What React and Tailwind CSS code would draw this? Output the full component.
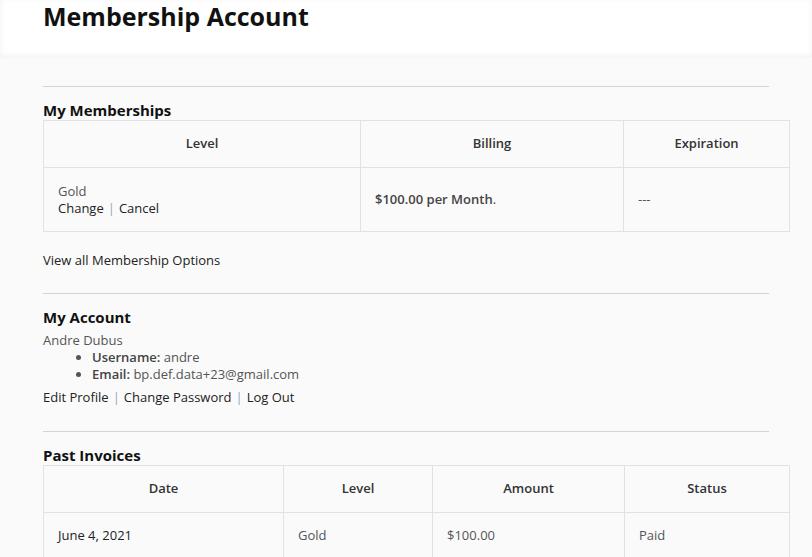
export default function App() {
  const f = { fontFamily: '"Open Sans", sans-serif' };
  const Pipe = () => <span className="text-[#8fa9c4] mx-[4px]">|</span>;
  return (
    <div style={f} className="w-[812px] h-[557px] overflow-hidden bg-[#fafafa] text-[13px] text-[#222]">
      <div className="h-[58px] bg-white shadow-[0_-2px_6px_rgba(0,0,0,0.06)_inset] pl-[43px]">
        <h1 className="text-[25px] font-bold leading-[30px] pt-[1px] text-[#111]">Membership Account</h1>
      </div>
      <div className="mx-[43px] pt-[28px]">
        <div className="border-t border-[#d4d4d4]" />
        <h2 className="text-[15px] font-bold leading-[20px] mt-[13px] text-[#111]">My Memberships</h2>
        <table className="w-[747px] border-collapse border border-[#e2e2e2] mt-[0px]">
          <thead>
            <tr className="h-[47px]">
              <th className="w-[317px] border border-[#e2e2e2] font-semibold text-[#333]">Level</th>
              <th className="w-[263px] border border-[#e2e2e2] font-semibold text-[#333]">Billing</th>
              <th className="border border-[#e2e2e2] font-semibold text-[#333]">Expiration</th>
            </tr>
          </thead>
          <tbody>
            <tr className="h-[64px]">
              <td className="border border-[#e2e2e2] px-[14px] leading-[17px]">
                <div className="text-[#555]">Gold</div>
                <div>Change<Pipe />Cancel</div>
              </td>
              <td className="border border-[#e2e2e2] px-[14px] text-[#444]"><b className="font-semibold">$100.00 per Month</b>.</td>
              <td className="border border-[#e2e2e2] px-[14px] text-[#555]">---</td>
            </tr>
          </tbody>
        </table>
        <div className="mt-[19px] leading-[18px]">View all Membership Options</div>
        <div className="border-t border-[#d4d4d4] mt-[24px]" />
        <h2 className="text-[15px] font-bold leading-[20px] mt-[13px] text-[#111]">My Account</h2>
        <div className="text-[#555] leading-[17px] mt-[5px]">Andre Dubus</div>
        <ul className="list-disc pl-[49px] text-[#555] leading-[17px]">
          <li><b className="font-semibold text-[#444]">Username:</b> andre</li>
          <li><b className="font-semibold text-[#444]">Email:</b> bp.def.data+23@gmail.com</li>
        </ul>
        <div className="mt-[6px] leading-[17px]">Edit Profile<Pipe />Change Password<Pipe />Log Out</div>
        <div className="border-t border-[#d4d4d4] mt-[25px]" />
        <h2 className="text-[15px] font-bold leading-[20px] mt-[13px] text-[#111]">Past Invoices</h2>
        <table className="w-[747px] border-collapse border border-[#e2e2e2]">
          <thead>
            <tr className="h-[47px]">
              <th className="w-[240px] border border-[#e2e2e2] font-semibold text-[#333]">Date</th>
              <th className="w-[149px] border border-[#e2e2e2] font-semibold text-[#333]">Level</th>
              <th className="w-[192px] border border-[#e2e2e2] font-semibold text-[#333]">Amount</th>
              <th className="border border-[#e2e2e2] font-semibold text-[#333]">Status</th>
            </tr>
          </thead>
          <tbody>
            <tr className="h-[46px]">
              <td className="border border-[#e2e2e2] px-[14px]">June 4, 2021</td>
              <td className="border border-[#e2e2e2] px-[14px] text-[#555]">Gold</td>
              <td className="border border-[#e2e2e2] px-[14px] text-[#555]">$100.00</td>
              <td className="border border-[#e2e2e2] px-[14px] text-[#555]">Paid</td>
            </tr>
          </tbody>
        </table>
      </div>
    </div>
  );
}
